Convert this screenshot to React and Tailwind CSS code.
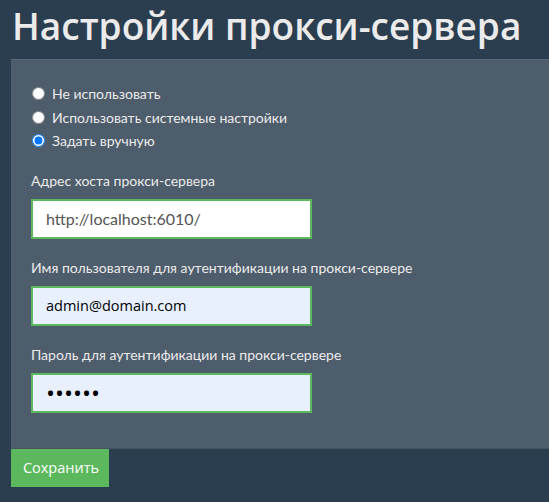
import React from "react";

const sans = { fontFamily: '"Open Sans", "Noto Sans", sans-serif' };
const lato = { fontFamily: 'Lato, "Open Sans", sans-serif' };

function Radio({ label, checked }) {
  return (
    <label className="flex h-[23.5px] items-center text-[14px] text-[#ebebeb]" style={lato}>
      <input type="radio" name="proxy" defaultChecked={checked} className="ml-[1px] mr-[7px] h-[13px] w-[13px]" />
      {label}
    </label>
  );
}

function Field({ label, value, type = "text", autofill, first }) {
  const isPassword = type === "password";
  return (
    <div className={first ? "" : "mt-[19px]"}>
      <div className="h-[20px] text-[14px] leading-[20px] text-[#ebebeb]" style={lato}>
        {label}
      </div>
      <input
        type={type}
        defaultValue={value}
        readOnly
        className={
          "mt-[8px] block h-[40px] w-[281px] border-2 border-[#5cb85c] pl-[13px] outline-none " +
          (autofill ? "bg-[#e8f0fe] text-black " : "bg-white text-[#555555] ") +
          (isPassword ? "text-[24px] tracking-[0px]" : autofill ? "text-[14.5px]" : "text-[16px]")
        }
        style={autofill ? sans : lato}
      />
    </div>
  );
}

export default function App() {
  return (
    <div className="h-[502px] w-[549px] overflow-hidden bg-[#2b3e50]">
      <h1 className="h-[52px] pl-[12px] text-[37px] font-semibold leading-[52px] text-[#ebebeb]" style={sans}>
        Настройки прокси-сервера
      </h1>
      <div className="ml-[11px] mt-[7px] border-t border-b border-t-[#5a6978] border-b-[#46535f] bg-[#4e5d6c] pb-[35px] pl-[20px] pt-[22px]">
        <Radio label="Не использовать" />
        <Radio label="Использовать системные настройки" />
        <Radio label="Задать вручную" checked />
        <div className="mt-[18px]">
          <Field first label="Адрес хоста прокси-сервера" value="http://localhost:6010/" />
          <Field label="Имя пользователя для аутентификации на прокси-сервере" value="admin@domain.com" autofill />
          <Field label="Пароль для аутентификации на прокси-сервере" value="secret" type="password" autofill />
        </div>
      </div>
      <button className="ml-[11px] h-[38px] w-[98px] bg-[#5cb85c] pl-[2px] text-[14.5px] text-white" style={sans}>
        Сохранить
      </button>
    </div>
  );
}
